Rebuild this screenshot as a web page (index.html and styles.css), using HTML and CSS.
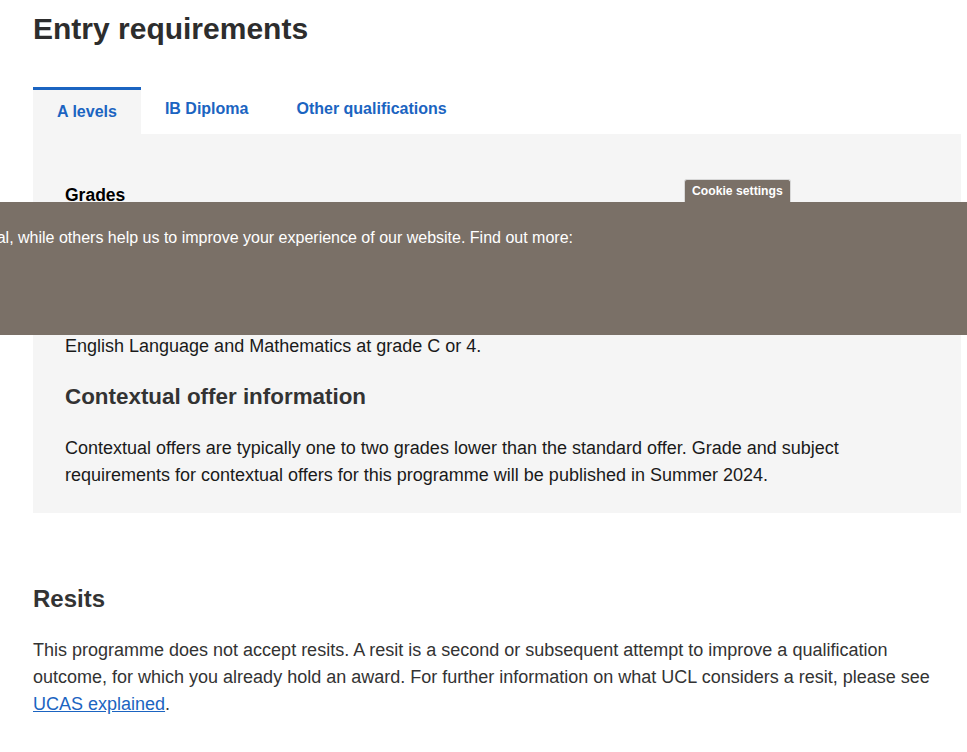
FILE: index.html
```html
<!DOCTYPE html>
<html lang="en">
<head>
<meta charset="utf-8">
<title>Entry requirements</title>
<link rel="stylesheet" href="styles.css">
</head>
<body>
<main class="page">
  <h1 class="title">Entry requirements</h1>
  <div class="tabs">
    <div class="tab active">A levels</div>
    <div class="tab">IB Diploma</div>
    <div class="tab">Other qualifications</div>
  </div>
  <section class="panel">
    <h4 class="label">Grades</h4>
    <p class="ptext">A*AA</p>
    <h4 class="label">Subjects</h4>
    <p class="ptext">Chemistry and Mathematics required.</p>
    <h4 class="label">GCSEs</h4>
    <p class="ptext">English Language and Mathematics at grade C or 4.</p>
    <h3 class="sub">Contextual offer information</h3>
    <p class="ptext">Contextual offers are typically one to two grades lower than the standard offer. Grade and subject requirements for contextual offers for this programme will be published in Summer 2024.</p>
  </section>
  <section class="resits">
    <h2 class="sub2">Resits</h2>
    <p class="body">This programme does not accept resits. A resit is a second or subsequent attempt to improve a qualification outcome, for which you already hold an award. For further information on what UCL considers a resit, please see <a href="#" class="link">UCAS explained</a>.</p>
  </section>
</main>
<div class="cookie">
  <div class="cookie-tab">Cookie settings</div>
  <div class="cookie-line"><span>Some cookies on this website are essential, while others help us to improve your experience of our website. Find out more:</span></div>
</div>
</body>
</html>
```

FILE: styles.css
```css
html, body { margin: 0; padding: 0; background: #fff; }
body { font-family: "Liberation Sans", Arial, sans-serif; color: #333; }
.page { padding: 0 6px 40px 33px; }
.title { margin: 0; padding-top: 12px; font-size: 30px; line-height: 34px; font-weight: bold; color: #2d2d2d; }
.tabs { display: flex; margin-top: 41px; }
.tab { padding: 0 24px; font-size: 16px; font-weight: bold; color: #1b64c1; line-height: 20px; padding-top: 9px; height: 35px; border-top: 3px solid transparent; }
.tab.active { background: #f5f5f5; border-top-color: #1b64c1; padding-top: 12px; height: 32px; }
.panel { background: #f5f5f5; padding: 51px 32px 24px; }
.label { margin: 0; font-size: 17.5px; line-height: 20px; color: #000; font-weight: bold; }
.ptext { margin: 0 0 17px; font-size: 18px; line-height: 27px; color: #1a1a1a; }
.sub { margin: 22px 0 23px; font-size: 22.4px; line-height: 30px; font-weight: bold; color: #333; }
.panel .ptext:last-child { margin-bottom: 0; }
.resits { padding-top: 72px; }
.sub2 { margin: 0 0 24px; font-size: 24px; line-height: 28px; font-weight: bold; color: #333; }
.body { margin: 0; font-size: 18px; line-height: 27px; color: #333; }
.link { color: #1b64c1; text-decoration: underline; }
.cookie { position: absolute; left: 0; top: 202px; width: 967px; height: 133px; background: #7a7067; }
.cookie-tab { position: absolute; left: 684px; top: -23px; height: 23px; padding: 0 7px; background: #7a7067; color: #fff; font-size: 12.2px; font-weight: bold; line-height: 22px; border-radius: 3px 3px 0 0; border: 1px solid #d8d8d8; border-bottom: none; box-sizing: border-box; }
.cookie-line { display: flex; justify-content: flex-end; width: 573px; overflow: hidden; padding-top: 26px; }
.cookie-line span { white-space: nowrap; color: #fff; font-size: 16px; line-height: 20px; }
```
